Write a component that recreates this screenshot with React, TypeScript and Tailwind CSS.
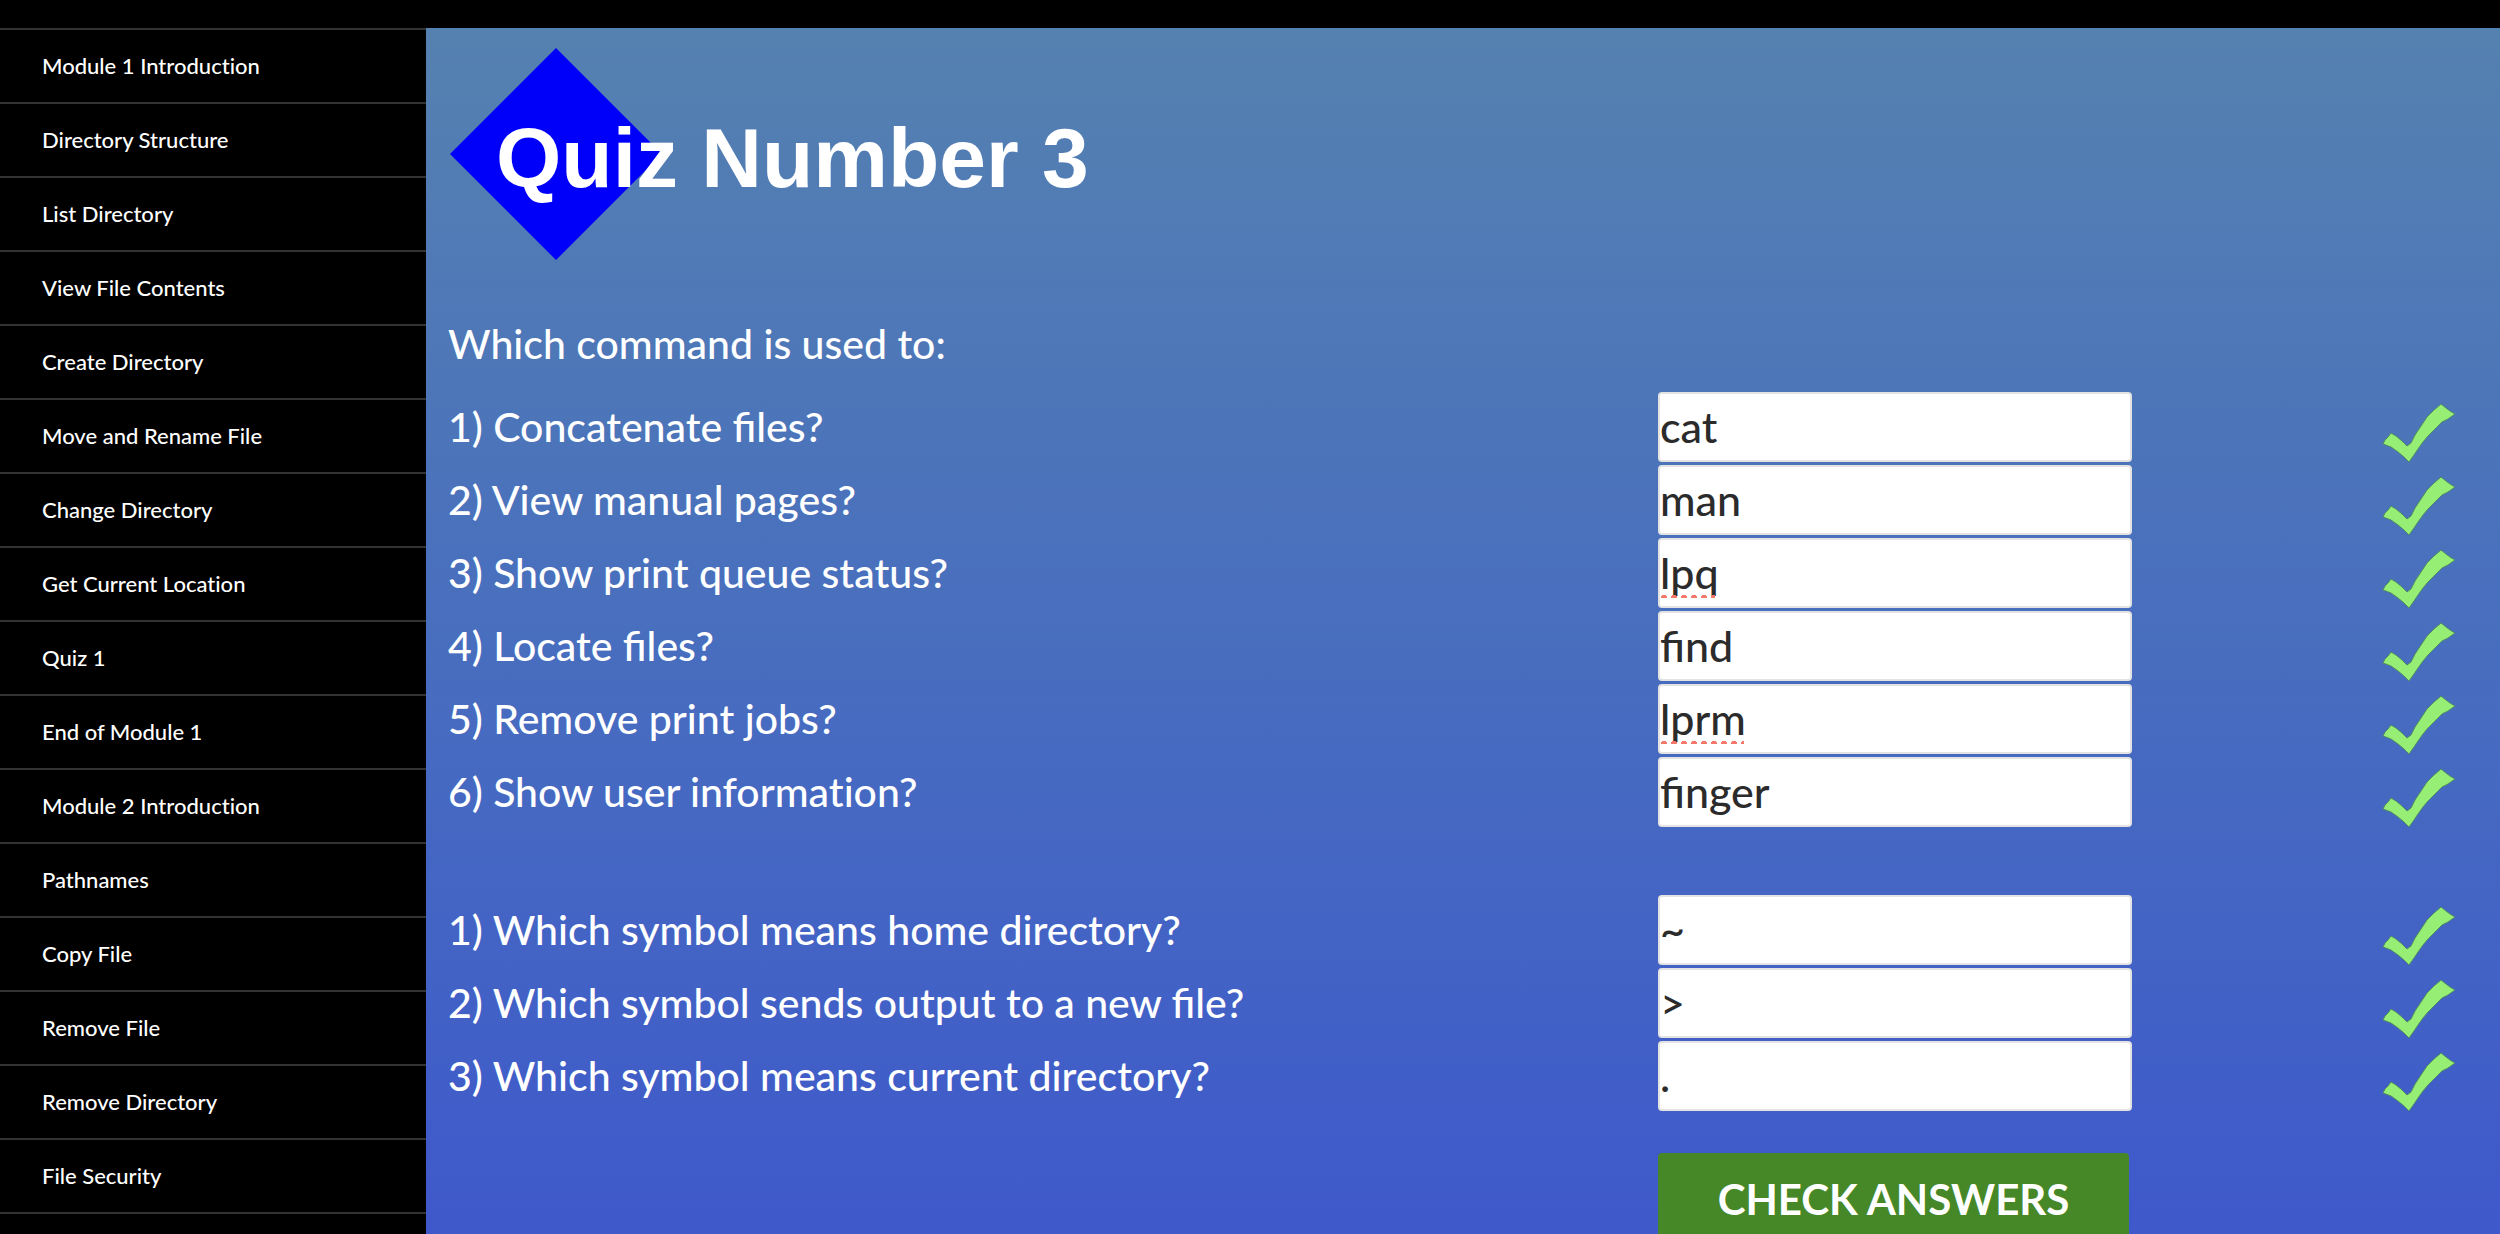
import React from "react";

const navItems = [
  "Module 1 Introduction",
  "Directory Structure",
  "List Directory",
  "View File Contents",
  "Create Directory",
  "Move and Rename File",
  "Change Directory",
  "Get Current Location",
  "Quiz 1",
  "End of Module 1",
  "Module 2 Introduction",
  "Pathnames",
  "Copy File",
  "Remove File",
  "Remove Directory",
  "File Security",
];

type Question = {
  id: string;
  text: string;
  answer: string;
  /** Width class of the spelling underline, for answers that are not dictionary words. */
  underline?: string;
  /** Turns ligatures off for texts where they would join "ti". */
  plain?: boolean;
};

const commandQuestions: Question[] = [
  { id: "c1", text: "1) Concatenate files?", answer: "cat" },
  { id: "c2", text: "2) View manual pages?", answer: "man" },
  { id: "c3", text: "3) Show print queue status?", answer: "lpq", underline: "w-[54px]" },
  { id: "c4", text: "4) Locate files?", answer: "find" },
  { id: "c5", text: "5) Remove print jobs?", answer: "lprm", underline: "w-[83px]" },
  { id: "c6", text: "6) Show user information?", answer: "finger", plain: true },
];

const symbolQuestions: Question[] = [
  { id: "s1", text: "1) Which symbol means home directory?", answer: "~" },
  { id: "s2", text: "2) Which symbol sends output to a new file?", answer: ">" },
  { id: "s3", text: "3) Which symbol means current directory?", answer: "." },
];

function CheckMark() {
  return (
    <svg viewBox="0 0 74 60" className="mt-3 h-[60px] w-[74px]" role="img" aria-label="Correct">
      <path
        d="M1 41 L3 37 L6 34 L9 30 L14 33 L20 38 L25 43 L29 40 L33 32 L39 23 L45 14 L52 7 L59 1 L64 5 L68 8 L73 11 L66 16 L60 19 L53 26 L46 33 L41 39 L36 46 L32 52 L27 59 L22 54 L16 49 L9 44 Z"
        fill="#96ee74"
        stroke="#4f8a62"
        strokeWidth="1"
        strokeLinejoin="round"
      />
    </svg>
  );
}

function QuestionRow({ q }: { q: Question }) {
  return (
    <div className="grid h-[70px] grid-cols-[1210fr_724fr_96fr] items-center">
      <label htmlFor={q.id} className={q.plain ? "[font-variant-ligatures:none]" : ""}>
        {q.text}
      </label>
      <div className="relative">
        <input
          id={q.id}
          type="text"
          defaultValue={q.answer}
          spellCheck={false}
          className="block h-[70px] w-[474px] rounded-sm border-2 border-[#e3e3e3] bg-white text-[43px] text-[#2b2b2b] outline-none"
        />
        {q.underline && (
          <span
            aria-hidden="true"
            className={`absolute bottom-[10px] left-[3px] h-[3px] bg-[radial-gradient(circle_at_3px_3px,#f4796b_3px,transparent_3px)] bg-[size:10px_3px] ${q.underline}`}
          />
        )}
      </div>
      <CheckMark />
    </div>
  );
}

export default function App() {
  return (
    <div className="h-screen overflow-hidden bg-black pt-7 font-['Lato',sans-serif] text-white">
      <div className="flex h-full">
        <nav className="w-[426px] shrink-0 bg-black text-[22px] font-medium leading-[72px] [font-variant-ligatures:none]">
          <ul className="border-b-2 border-[#333333]">
            {navItems.map((item) => (
              <li key={item} className="border-t-2 border-[#333333]">
                <a href="#" className="block pl-[42px]">
                  {item}
                </a>
              </li>
            ))}
          </ul>
        </nav>
        <main className="flex-1 overflow-hidden bg-linear-to-b from-[#5581b0] to-[#3f58cb] px-[22px] pt-5 text-[41px] font-medium leading-[70px]">
          <h1 className="relative h-[212px] font-['Liberation_Sans',Arial,sans-serif] text-[84px] font-bold leading-[220px]">
            <svg viewBox="0 0 212 212" className="absolute left-0.5 top-0 size-[212px]" aria-hidden="true">
              <polygon points="106,0 212,106 106,212 0,106" fill="#0000fa" />
            </svg>
            <span className="relative pl-12">Quiz Number 3</span>
          </h1>
          <form className="mt-12" onSubmit={(e) => e.preventDefault()}>
            <p className="leading-[72px]">Which command is used to:</p>
            <div className="mt-[11px] flex flex-col gap-[3px]">
              {commandQuestions.map((q) => (
                <QuestionRow key={q.id} q={q} />
              ))}
            </div>
            <div className="mt-[68px] flex flex-col gap-[3px]">
              {symbolQuestions.map((q) => (
                <QuestionRow key={q.id} q={q} />
              ))}
            </div>
            <div className="mt-[43px] grid grid-cols-[1210fr_820fr]">
              <button
                type="submit"
                className="col-start-2 h-[92px] w-[471px] rounded-sm bg-[#468827] text-center text-[42px] font-bold"
              >
                CHECK ANSWERS
              </button>
            </div>
          </form>
        </main>
      </div>
    </div>
  );
}
